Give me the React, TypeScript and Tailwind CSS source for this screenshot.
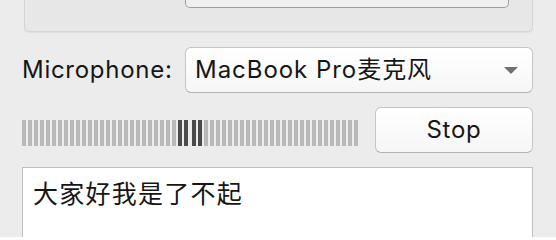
import React from "react";

// level meter: 56 segments split in two halves, the right half sits 2px further out
const LEFT = Array.from({ length: 28 }, (_, i) => i);
const RIGHT = Array.from({ length: 28 }, (_, i) => i + 28);
const ACTIVE = new Set([26, 27, 28, 29]);

function Bar({ i }: { i: number }) {
  return <div className={ACTIVE.has(i) ? "w-[4px] h-full bg-[#4b4b4b]" : "w-[4px] h-full bg-[#b9b9b9]"} />;
}

export default function App() {
  return (
    <div
      className="w-[556px] h-[237px] overflow-hidden bg-[#ececec] text-[#161616] text-[24px] tracking-[0.03em]"
      style={{ fontFamily: "Inter, 'Noto Sans CJK SC', sans-serif" }}
    >
      {/* bottom of the group box above */}
      <div className="ml-[24px] w-[509px] h-[32px] bg-[#e7e7e7] border border-t-0 border-[#d4d4d4] rounded-b-[5px] shadow-[0_1px_1px_rgba(0,0,0,0.06)]">
        <div className="ml-[160px] w-[324px] h-[8px] bg-[#efefef] border border-t-0 border-[#9e9e9e] rounded-b-[5px]" />
      </div>

      {/* microphone row */}
      <div className="mt-[15px] flex items-center h-[46px]">
        <span className="ml-[22px] w-[163px]">Microphone:</span>
        <div className="w-[348px] h-[46px] flex items-center pl-[9px] pr-[14px] bg-gradient-to-b from-[#ffffff] to-[#f6f6f6] border border-[#c5c5c5] border-b-[#b3b3b3] rounded-[6px]">
          <span className="flex-1 tracking-[0.04em]">MacBook Pro麦克风</span>
          <svg width="14" height="7" viewBox="0 0 14 7" className="mt-[1px]">
            <path d="M0 0H14L7 7Z" fill="#707070" />
          </svg>
        </div>
      </div>

      {/* level meter + stop */}
      <div className="mt-[14px] flex items-center h-[46px]">
        <div className="ml-[22px] w-[336px] h-[26px] mt-[6px] flex gap-[4px]">
          <div className="flex gap-[2px] h-full">
            {LEFT.map((i) => (
              <Bar key={i} i={i} />
            ))}
          </div>
          <div className="flex gap-[2px] h-full">
            {RIGHT.map((i) => (
              <Bar key={i} i={i} />
            ))}
          </div>
        </div>
        <button className="ml-[17px] w-[158px] h-[46px] bg-gradient-to-b from-[#ffffff] to-[#f6f6f6] border border-[#c5c5c5] border-b-[#b3b3b3] rounded-[6px]">
          Stop
        </button>
      </div>

      {/* transcript */}
      <div className="mt-[14px] ml-[22px] w-[511px] h-[90px] bg-white border border-[#bfbfbf] pl-[10px] pt-[8px] text-[25px] tracking-[0.05em]">
        大家好我是了不起
      </div>
    </div>
  );
}
